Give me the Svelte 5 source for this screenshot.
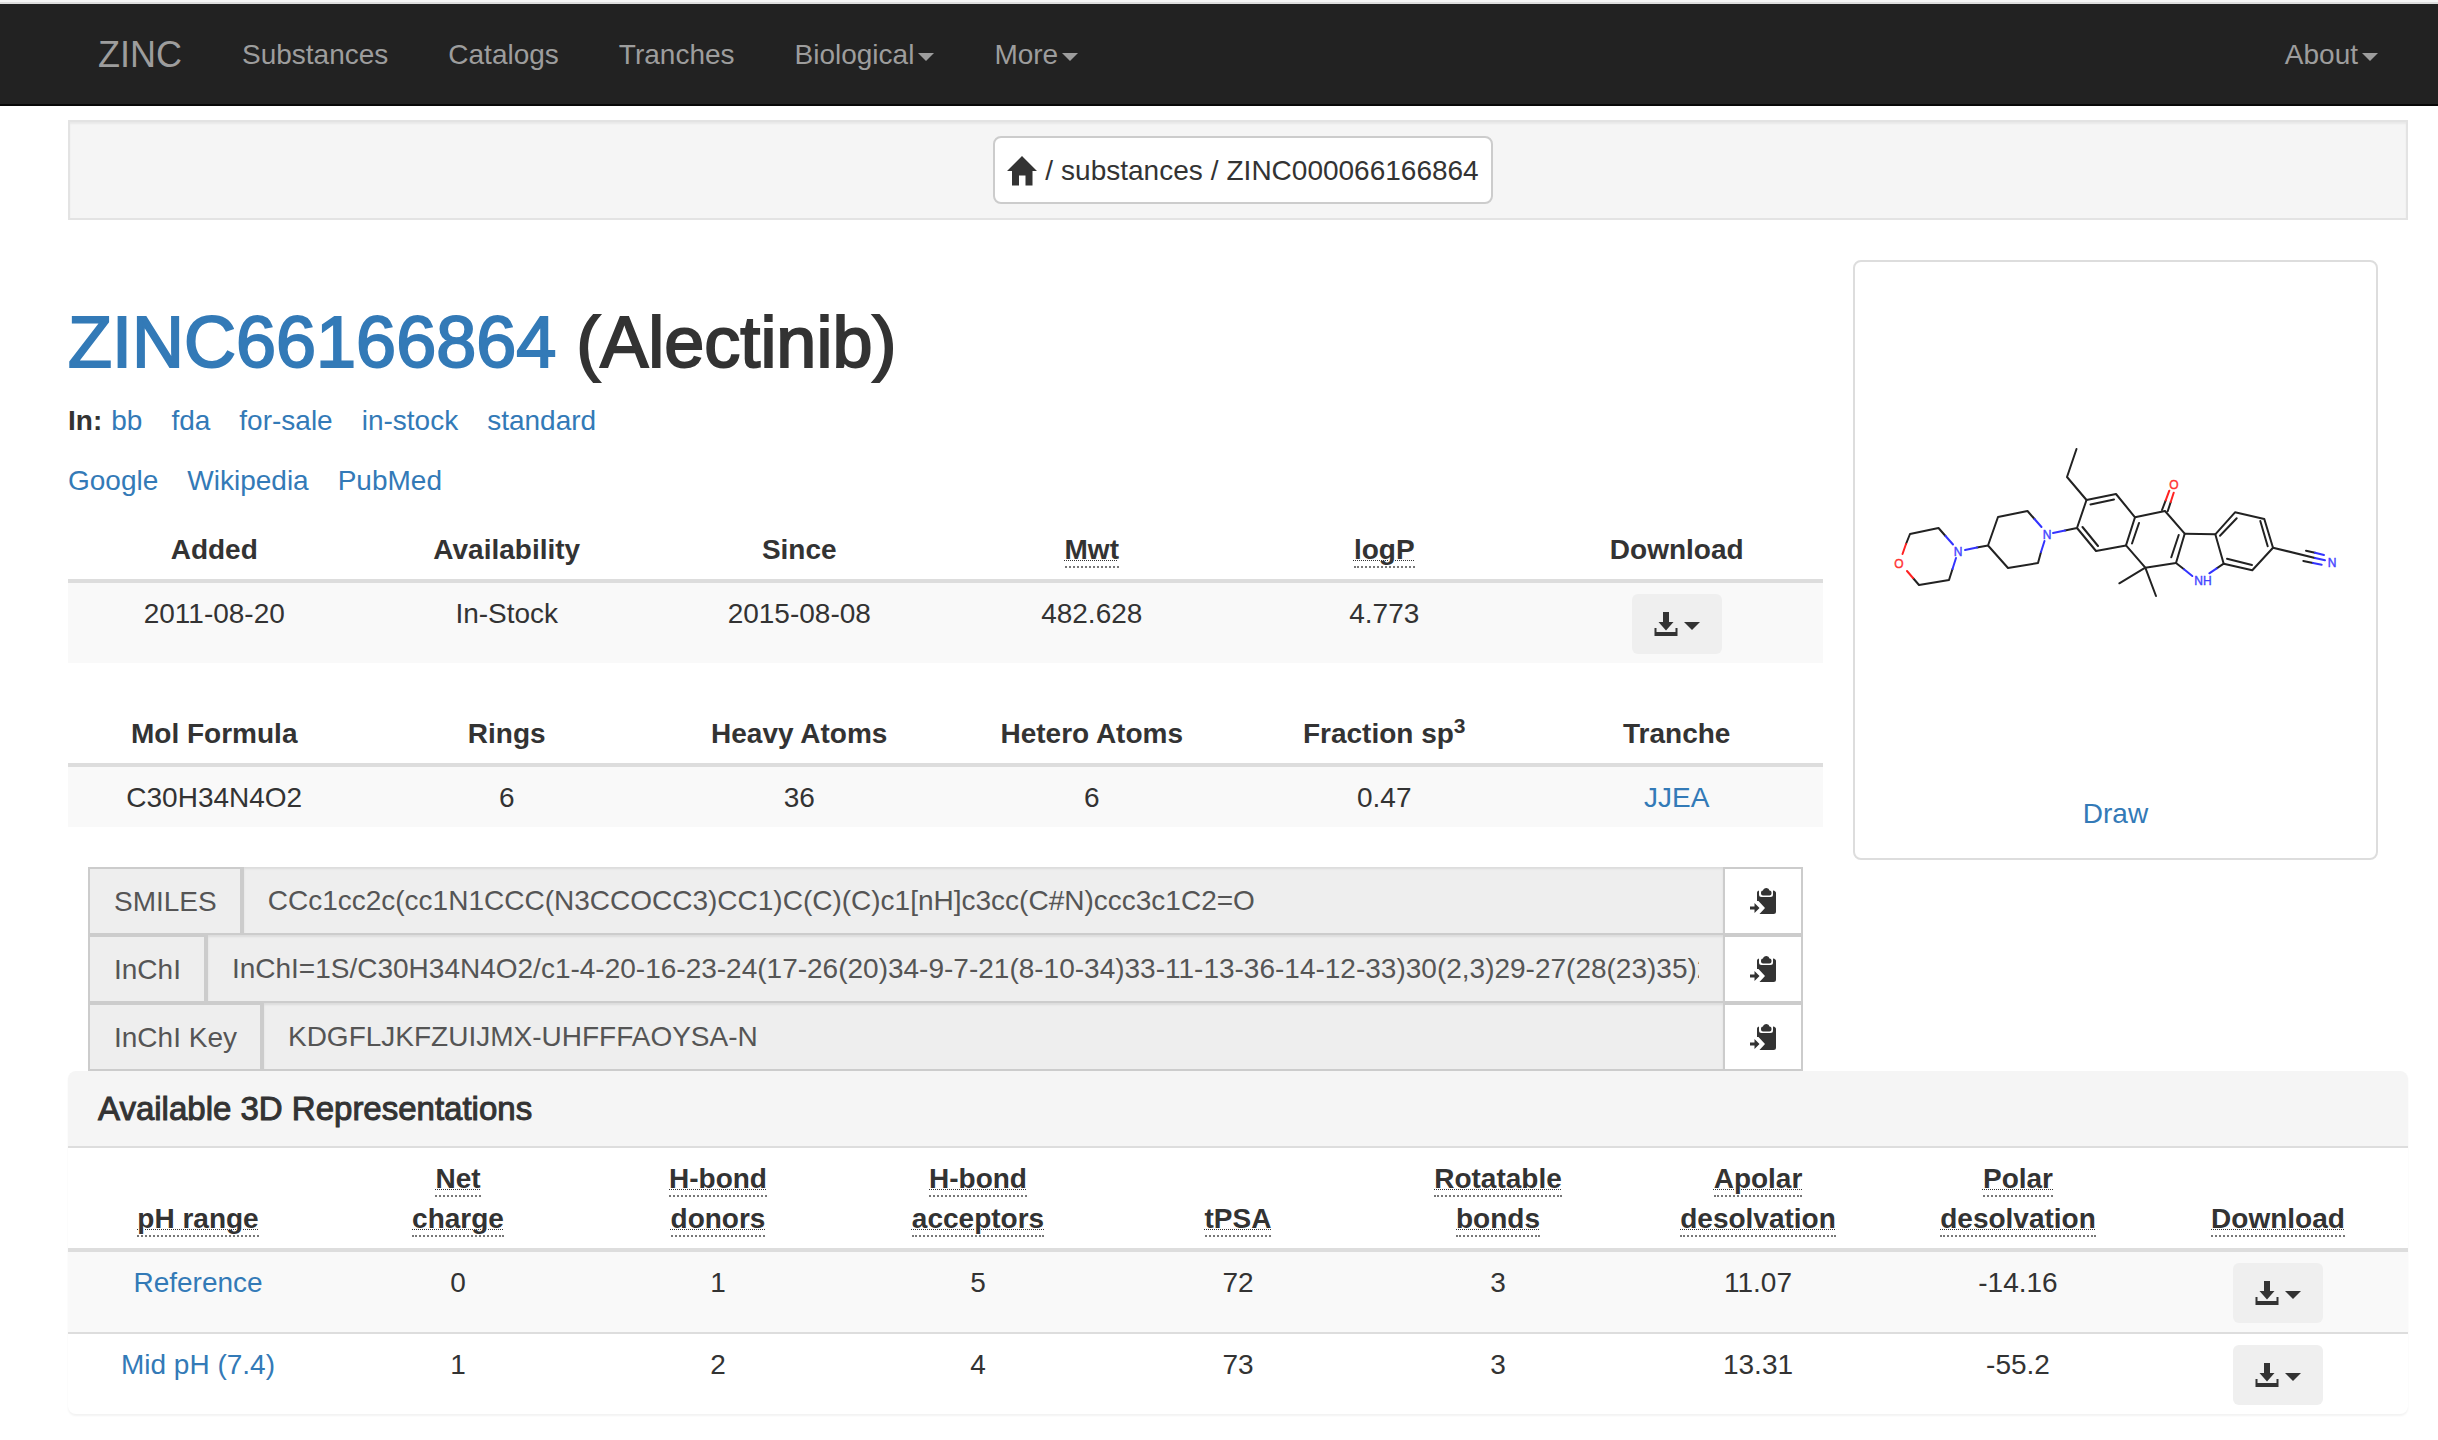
<script>
  const navLinks = [
    { label: 'Substances' },
    { label: 'Catalogs' },
    { label: 'Tranches' },
    { label: 'Biological', menu: true },
    { label: 'More', menu: true },
  ];

  const catalogs = ['bb', 'fda', 'for-sale', 'in-stock', 'standard'];
  const searches = ['Google', 'Wikipedia', 'PubMed'];

  const identifiers = [
    { id: 'smiles', label: 'SMILES', value: 'CCc1cc2c(cc1N1CCC(N3CCOCC3)CC1)C(C)(C)c1[nH]c3cc(C#N)ccc3c1C2=O' },
    {
      id: 'inchi',
      label: 'InChI',
      value:
        'InChI=1S/C30H34N4O2/c1-4-20-16-23-24(17-26(20)34-9-7-21(8-10-34)33-11-13-36-14-12-33)30(2,3)29-27(28(23)35)22-6-5-19(18-31)15-25(22)32-29/h5-6,15-17,21,32H,4,7-14H2,1-3H3',
    },
    { id: 'inchikey', label: 'InChI Key', value: 'KDGFLJKFZUIJMX-UHFFFAOYSA-N' },
  ];

  const repHeads = [
    ['pH range'],
    ['Net', 'charge'],
    ['H-bond', 'donors'],
    ['H-bond', 'acceptors'],
    ['tPSA'],
    ['Rotatable', 'bonds'],
    ['Apolar', 'desolvation'],
    ['Polar', 'desolvation'],
    ['Download'],
  ];

  const reps = [
    { name: 'Reference', cells: ['0', '1', '5', '72', '3', '11.07', '-14.16'] },
    { name: 'Mid pH (7.4)', cells: ['1', '2', '4', '73', '3', '13.31', '-55.2'] },
  ];
</script>

{#snippet downloadButton(label)}
  <button class="download" type="button" aria-label={label}>
    <svg width="24" height="24" viewBox="0 0 24 24" aria-hidden="true">
      <path d="M9 0h6v10h4.500L12 18.500 4.500 10H9z" />
      <path d="M.5 16h2v4h19v-4h2v8H.5z" />
    </svg>
    <span class="caret"></span>
  </button>
{/snippet}

<nav class="navbar">
  <a class="brand" href="#home">ZINC</a>
  {#each navLinks as link}
    <a href="#{link.label.toLowerCase()}">{link.label}{#if link.menu}<span class="caret"></span>{/if}</a>
  {/each}
  <a class="right" href="#about">About<span class="caret"></span></a>
</nav>

<main>
  <div class="well">
    <div class="crumbs">
      <a href="#home" aria-label="Home">
        <svg width="30" height="30" viewBox="0 0 30 30" aria-hidden="true">
          <path d="M15 0 30 15H25.500V29.500H18.500V19.500H12V29.500H5V15H0z" />
        </svg>
      </a>
      <span>/</span>
      <a href="#substances">substances</a>
      <span>/</span>
      <span>ZINC000066166864</span>
    </div>
  </div>

  <div class="columns">
    <section class="details">
      <h1><a href="#substance">ZINC66166864</a> (Alectinib)</h1>

      <div class="links">
        <strong>In:</strong>
        {#each catalogs as name}<a href="#{name}">{name}</a>{/each}
      </div>
      <div class="links">
        {#each searches as name}<a href="#{name.toLowerCase()}">{name}</a>{/each}
      </div>

      <table>
        <thead>
          <tr>
            <th>Added</th>
            <th>Availability</th>
            <th>Since</th>
            <th><abbr title="Molecular weight">Mwt</abbr></th>
            <th><abbr title="Partition coefficient">logP</abbr></th>
            <th>Download</th>
          </tr>
        </thead>
        <tbody>
          <tr>
            <td>2011-08-20</td>
            <td>In-Stock</td>
            <td>2015-08-08</td>
            <td>482.628</td>
            <td>4.773</td>
            <td>{@render downloadButton('Download substance')}</td>
          </tr>
        </tbody>
      </table>

      <table>
        <thead>
          <tr>
            <th>Mol Formula</th>
            <th>Rings</th>
            <th>Heavy Atoms</th>
            <th>Hetero Atoms</th>
            <th>Fraction sp<sup>3</sup></th>
            <th>Tranche</th>
          </tr>
        </thead>
        <tbody>
          <tr>
            <td>C30H34N4O2</td>
            <td>6</td>
            <td>36</td>
            <td>6</td>
            <td>0.47</td>
            <td><a href="#jjea">JJEA</a></td>
          </tr>
        </tbody>
      </table>

      <div class="identifiers">
        {#each identifiers as item}
          <div class="group">
            <label for={item.id}>{item.label}</label>
            <input id={item.id} type="text" value={item.value} readonly />
            <button type="button" aria-label="Copy {item.label}">
              <svg width="26" height="26" viewBox="0 0 26 26" aria-hidden="true">
                <path d="M7 4.500Q7 3 9 2.500V6.500Q9 9 11.500 9H20.500Q23 9 23 6.500V2.500Q26 3 26 5V23.500Q26 26 23.500 26H9.500L15 20 8.500 13H7z" />
                <path d="M11 4.500Q11 2.500 13 2.500 13.500 0 16.500 0 19 0 19.500 2.500 21.500 2.500 21.500 4.500V5.500Q21.500 7.500 19.500 7.500H13Q11 7.500 11 5.500z" />
                <path d="M0 18.500H4.500V15L9.500 20 4.500 25V21.500H0z" />
              </svg>
            </button>
          </div>
        {/each}
      </div>
    </section>

    <aside class="drawing">
      <svg class="molecule" viewBox="15 -158 521 532" role="img" aria-label="Structure of Alectinib">
        <g class="bond">
          <path d="M66 124 70 114 98.500 108 105.500 116M112.500 149 109 160 79 165 73 158" />
          <path d="M137 127.500 148 125.500 158 97 187.500 91 194.500 99M201 132 198 143 168 148 148 125.500" />
          <path d="M225 110.500 237 108 246.500 80 276 74 295 97.300 286 125.400 256 131 237 108" />
          <path d="M250.500 84.500 274 79.500M242.500 107 258 126M299 103 292 123.500" />
          <path d="M246.500 80 227 57 236.500 29" />
          <path d="M295 97.300 325 91 344.700 113.700 336 143 305.300 147.700 286 125.400" />
          <path d="M322 90 325.700 80.300M327.700 91.300 330.700 82M338.700 115 331.300 137.300" />
          <path d="M305.300 147.700 279.300 163.300M305.300 147.700 316 176" />
          <path d="M336 143 344 149.300M376.700 148.300 383.700 143.700 375.300 114.300 344.700 113.700" />
          <path d="M375.300 114.300 395 92.300 424.300 99 433 127.700 412.300 150.300 383.700 143.700" />
          <path d="M380 115.700 396.700 98.300M420.300 101 427.700 126.300M387 138.700 412 145" />
          <path d="M433 127.700 475 138M466 130.700 475 132.700M463.300 141 473 143" />
        </g>
        <g class="bond nitrogen">
          <path d="M105.500 116 113 124.500M116 138 112.500 149M125 130 137 127.500" />
          <path d="M194.500 99 201.500 107M204.500 121 201 132M213 113 225 110.500" />
          <path d="M344 149.300 352.300 156M369.300 153.300 376.700 148.300" />
          <path d="M475 138 485 140.300M475 132.700 484 135M473 143 481.700 144.700" />
        </g>
        <g class="bond oxygen">
          <path d="M66 124 62.500 134M73 158 67 151M325.700 80.300 329.300 70.700M330.700 82 333.700 72.700" />
        </g>
        <g class="atoms">
          <text class="o" x="59" y="148">O</text>
          <text x="118" y="136">N</text>
          <text x="207" y="119">N</text>
          <text class="o" x="334" y="69">O</text>
          <text x="363" y="165">NH</text>
          <text x="492" y="147">N</text>
        </g>
      </svg>
      <a href="#draw">Draw</a>
    </aside>
  </div>

  <section class="panel">
    <h2>Available 3D Representations</h2>
    <table>
      <thead>
        <tr>
          {#each repHeads as lines}
            <th>
              {#each lines as line, i}{#if i > 0}<br />{/if}<abbr title={lines.join(' ')}>{line}</abbr>{/each}
            </th>
          {/each}
        </tr>
      </thead>
      <tbody>
        {#each reps as rep}
          <tr>
            <td><a href="#protomer">{rep.name}</a></td>
            {#each rep.cells as cell}<td>{cell}</td>{/each}
            <td>{@render downloadButton('Download ' + rep.name)}</td>
          </tr>
        {/each}
      </tbody>
    </table>
  </section>
</main>

<style>
  :global(body) {
    background: #fff;
    color: #333;
    font: 28px/40px 'Liberation Sans', Arial, sans-serif;
  }

  a {
    color: #337ab7;
    text-decoration: none;
  }

  svg {
    display: block;
    fill: #333;
  }

  button,
  input {
    font: inherit;
  }

  .caret {
    display: inline-block;
    margin-left: 4px;
    border: 8px solid transparent;
    border-top-color: currentColor;
    border-bottom: 0;
    vertical-align: middle;
  }

  .navbar {
    display: flex;
    align-items: center;
    height: 98px;
    margin-top: 4px;
    padding: 2px 30px 0 68px;
    border-bottom: 2px solid #080808;
    background: #222;
  }

  .navbar::before {
    content: '';
    position: absolute;
    inset: 0 0 auto;
    height: 2px;
    border-bottom: 2px solid #ddd;
    background: #f5f5f5;
  }

  .navbar a {
    padding: 0 30px;
    color: #9d9d9d;
  }

  .navbar .brand {
    font-size: 36px;
  }

  .navbar .right {
    margin-left: auto;
  }

  main {
    padding: 14px 30px 24px 68px;
  }

  .well {
    display: flex;
    justify-content: center;
    padding: 14px 0 14px 10px;
    border: 2px solid #e3e3e3;
    background: #f5f5f5;
    box-shadow: inset 0 2px 2px rgba(0, 0, 0, 0.05);
  }

  .crumbs {
    display: flex;
    align-items: center;
    gap: 8px;
    padding: 13px 12px 11px;
    border: 2px solid #ccc;
    border-radius: 8px;
    background: #fff;
  }

  .crumbs a {
    color: inherit;
  }

  .columns {
    display: grid;
    grid-template-columns: minmax(0, 3fr) minmax(0, 1fr);
    align-items: start;
  }

  h1 {
    margin: 82px 0 17px;
    font-size: 72px;
    line-height: 80px;
    font-weight: 400;
    -webkit-text-stroke: 2px currentColor;
  }

  .links {
    display: flex;
    gap: 29px;
    margin-bottom: 18px;
    padding-top: 2px;
  }

  .links strong {
    margin-right: -20px;
  }

  table {
    width: 100%;
    table-layout: fixed;
    border-collapse: collapse;
    text-align: center;
  }

  .details table {
    margin-bottom: 40px;
  }

  th,
  td {
    padding: 11px 10px 9px;
    vertical-align: top;
  }

  th {
    border-bottom: 4px solid #ddd;
    vertical-align: bottom;
  }

  tbody tr:nth-child(odd) {
    background: #f9f9f9;
  }

  abbr {
    padding-bottom: 1px;
    border-bottom: 2px dotted #777;
    text-decoration: underline dotted 1px;
  }

  sup {
    font-size: 21px;
    line-height: 0;
  }

  .download {
    display: inline-flex;
    align-items: center;
    justify-content: center;
    width: 90px;
    height: 60px;
    padding: 0;
    border: 0;
    border-radius: 6px;
    background: #efefef;
    color: #333;
    vertical-align: top;
  }

  .download .caret {
    margin: 4px 0 0 6px;
  }

  .identifiers {
    padding: 0 20px;
  }

  .group {
    display: flex;
    height: 68px;
    color: #555;
  }

  .group label {
    padding: 13px 23px 11px 24px;
    border: 2px solid #ccc;
    background: #eee;
  }

  .group input {
    flex: 1;
    min-width: 0;
    padding: 2px 24px 0;
    border: solid #ccc;
    border-width: 0 0 2px 2px;
    border-radius: 0;
    background: #eee;
    box-shadow: inset 0 2px 2px rgba(0, 0, 0, 0.08);
    color: #555;
    outline: 0;
  }

  .group button {
    display: flex;
    align-items: center;
    justify-content: center;
    width: 80px;
    padding: 0;
    border: 2px solid #ccc;
    background: #fff;
  }

  .drawing {
    display: flex;
    flex-direction: column;
    align-items: center;
    margin: 40px 30px 0;
    padding-bottom: 24px;
    border: 2px solid #ddd;
    border-radius: 8px;
  }

  .molecule {
    width: 100%;
  }

  .bond {
    fill: none;
    stroke: #222;
    stroke-width: 2;
    stroke-linecap: round;
    stroke-linejoin: round;
  }

  .nitrogen {
    stroke: #33f;
  }

  .oxygen {
    stroke: #f22;
  }

  .atoms {
    fill: #44f;
    stroke: #44f;
    stroke-width: 0.4;
    font-size: 12px;
    text-anchor: middle;
  }

  .atoms .o {
    fill: #f33;
    stroke: #f33;
  }

  .panel {
    border-radius: 8px;
    box-shadow: 0 2px 2px rgba(0, 0, 0, 0.05);
  }

  .panel h2 {
    margin: 0;
    padding: 20px 30px 19px;
    border-bottom: 2px solid #ddd;
    border-radius: 8px 8px 0 0;
    background: #f5f5f5;
    font-size: 33px;
    line-height: 36px;
    font-weight: 400;
    -webkit-text-stroke: 1px currentColor;
  }

  .panel tbody tr + tr td {
    border-top: 2px solid #ddd;
  }
</style>
